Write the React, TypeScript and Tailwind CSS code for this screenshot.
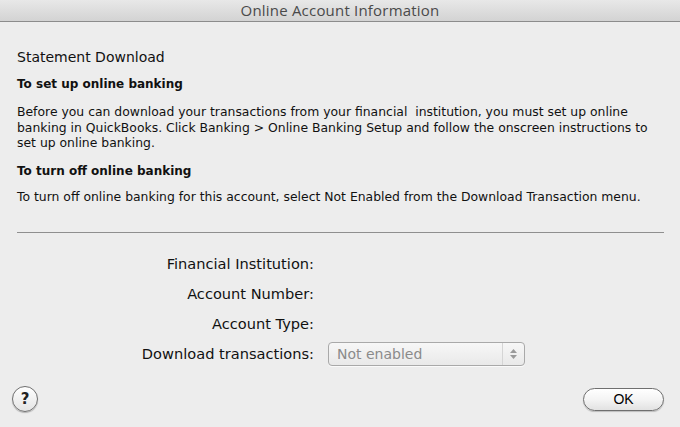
import React from 'react'

const body = { fontFamily: '"DejaVu Sans", "Liberation Sans", sans-serif' }

const fields = ['Financial Institution:', 'Account Number:', 'Account Type:']

export default function App() {
  return (
    <div className="w-[680px] h-[427px] bg-[#ededed] flex flex-col overflow-hidden text-[#111]" style={body}>
      {/* title bar */}
      <div className="h-[22px] shrink-0 flex items-center justify-center border-b border-[#8c8c8c] bg-gradient-to-b from-[#e8e8e8] to-[#d3d3d3]">
        <span className="text-[15px] text-[#4a4a4a] tracking-[0.2px]" style={{ fontFamily: '"Open Sans", sans-serif' }}>
          Online Account Information
        </span>
      </div>

      <div className="flex-1 flex flex-col px-[17px]">
        <div className="mt-[26px] text-[14px] leading-[18px]">Statement Download</div>
        <div className="mt-[10px] text-[12px] leading-[16px] font-bold">To set up online banking</div>
        <p className="mt-[12px] text-[12.4px] leading-[15.5px] whitespace-nowrap">
          Before you can download your transactions from your financial&nbsp; institution, you must set up online
          <br />
          banking in QuickBooks. Click Banking &gt; Online Banking Setup and follow the onscreen instructions to
          <br />
          set up online banking.
        </p>
        <div className="mt-[12px] text-[12px] leading-[16px] font-bold">To turn off online banking</div>
        <p className="mt-[10px] text-[12.4px] leading-[16px] whitespace-nowrap">
          To turn off online banking for this account, select Not Enabled from the Download Transaction menu.
        </p>

        <div className="mt-[27px] h-px bg-[#8f8f8f] w-[647px]" />

        {/* account fields */}
        <div className="mt-[22px] flex flex-col gap-[12px] text-[14.6px] leading-[18px]">
          {fields.map((f) => (
            <div key={f} className="w-[297px] text-right">
              {f}
            </div>
          ))}
          <div className="-mt-[3px] flex items-center">
            <div className="w-[297px] text-right">Download transactions:</div>
            <div className="ml-[14px] w-[197px] h-[24px] rounded-[4px] border border-[#a9a9a9] bg-gradient-to-b from-[#f7f7f7] to-[#e9e9e9] flex items-center shadow-[0_1px_0_#fafafa]">
              <span className="flex-1 pl-[8px] text-[14px] text-[#8a8a8a]">Not enabled</span>
              <div className="w-[22px] h-full border-l border-[#d5d5d5] flex flex-col items-center justify-center gap-[2px]">
                <svg width="7" height="4" viewBox="0 0 7 4">
                  <path d="M0 4 L3.5 0 L7 4 Z" fill="#9a9a9a" />
                </svg>
                <svg width="7" height="4" viewBox="0 0 7 4">
                  <path d="M0 0 L3.5 4 L7 0 Z" fill="#9a9a9a" />
                </svg>
              </div>
            </div>
          </div>
        </div>

        {/* bottom buttons */}
        <div className="mt-auto mb-[15px] flex items-center justify-between">
          <div className="-ml-[5px] w-[26px] h-[26px] rounded-full border border-[#707070] bg-gradient-to-b from-white to-[#e4e4e4] flex items-center justify-center shadow-[0_1px_1px_rgba(0,0,0,0.25)]">
            <span className="text-[15px] font-bold text-[#222] leading-none">?</span>
          </div>
          <div className="mr-[-1px] w-[81px] h-[23px] rounded-full border border-[#6f6f6f] bg-gradient-to-b from-white via-[#f4f4f4] to-[#e2e2e2] flex items-center justify-center shadow-[0_1px_1px_rgba(0,0,0,0.2)]">
            <span className="text-[14px] text-black" style={{ fontFamily: '"Liberation Sans", sans-serif' }}>OK</span>
          </div>
        </div>
      </div>
    </div>
  )
}
